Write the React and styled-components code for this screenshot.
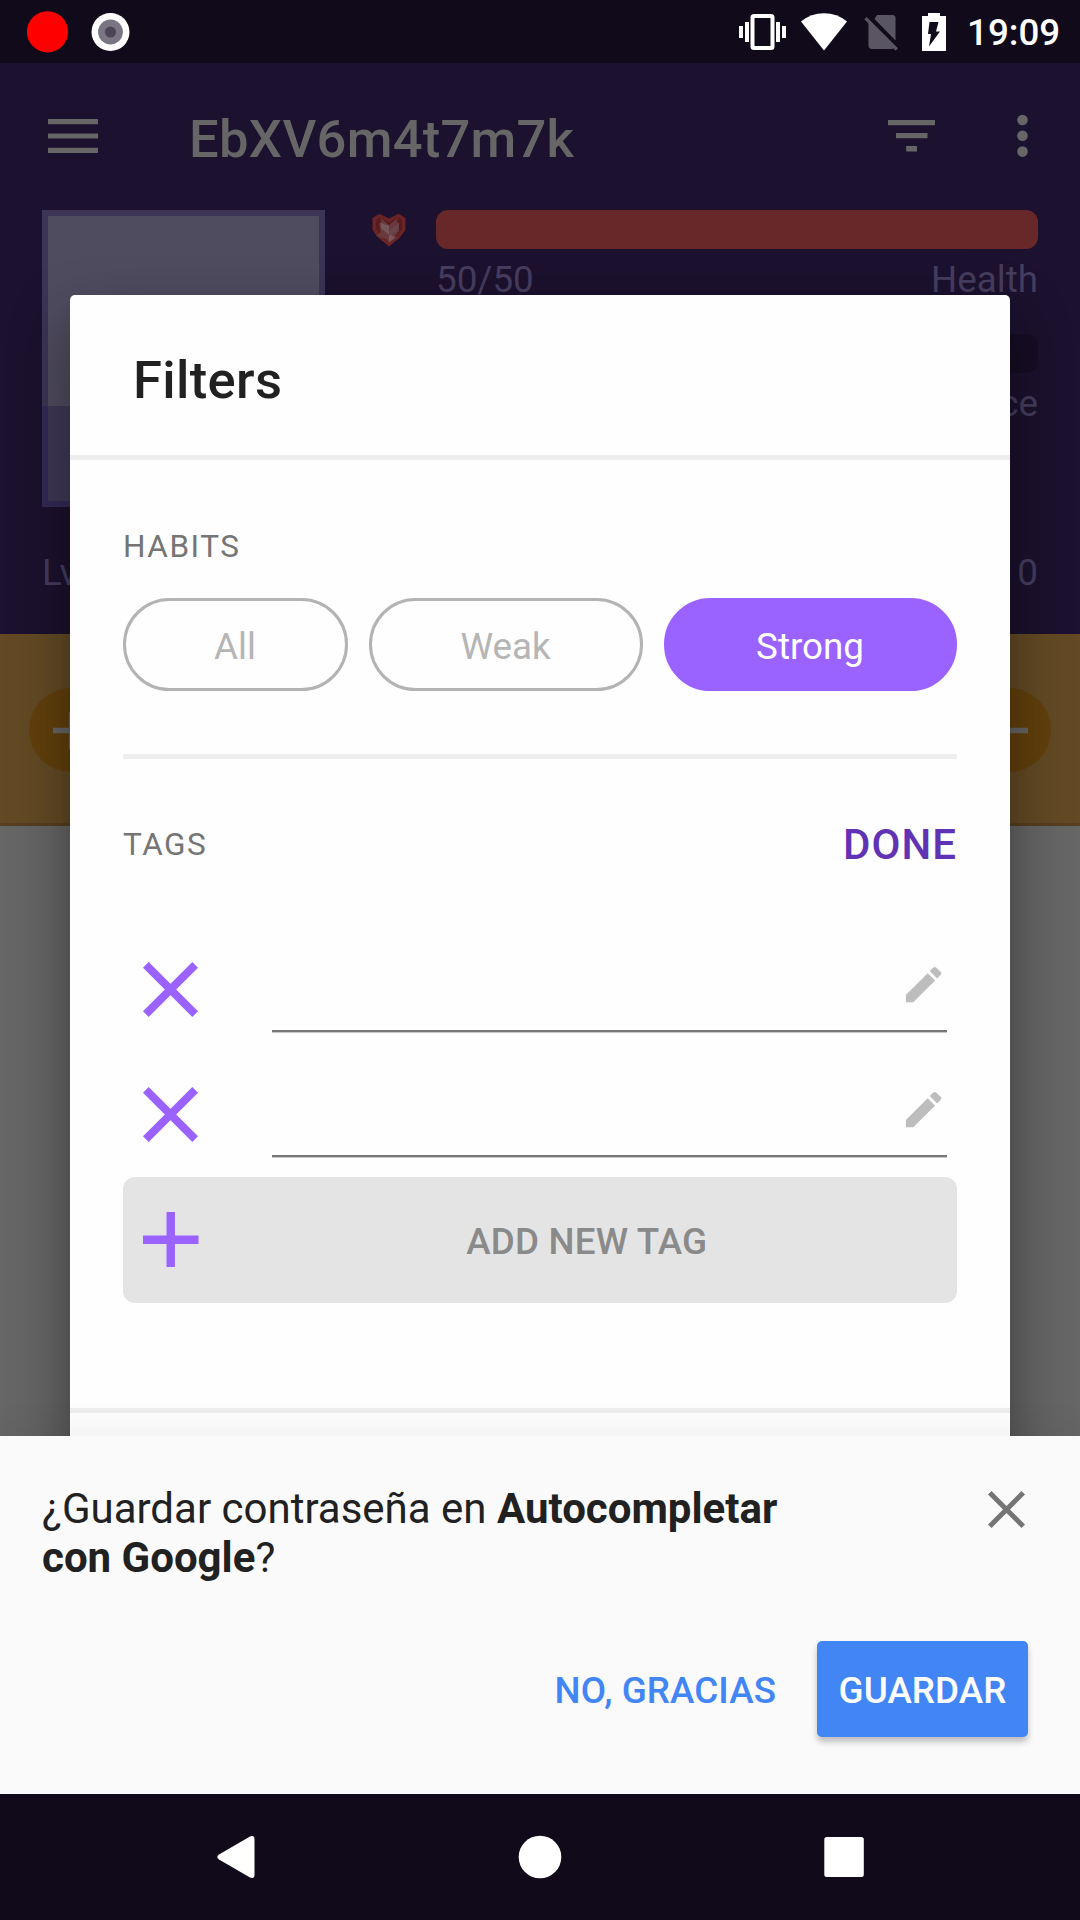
import React from "react";
import styled, { createGlobalStyle } from "styled-components";

const GlobalStyle = createGlobalStyle`
  * { box-sizing: border-box; }
  html, body { margin: 0; padding: 0; }
  body { width: 1080px; height: 1920px; overflow: hidden; background: #666; }
`;

const Screen = styled.div`
  position: relative;
  width: 1080px;
  height: 1920px;
  overflow: hidden;
  display: flex;
  flex-direction: column;
  background: #666666;
  font-family: Roboto, "Noto Sans", sans-serif;
  svg { display: block; flex: none; }
`;

const StatusBar = styled.header`
  display: flex;
  align-items: center;
  justify-content: space-between;
  height: 63px;
  flex: none;
  padding: 0 22px 0 27px;
  background: #110a1a;
`;

const StatusGroup = styled.div`
  display: flex;
  align-items: center;
  gap: ${(p) => p.$gap || 0}px;
`;

const Clock = styled.span`
  margin-left: 21px;
  margin-top: 2px;
  width: 91px;
  color: #fff;
  font-size: 36.75px;
  font-weight: 500;
  line-height: 43px;
  white-space: nowrap;
`;

const AppHeader = styled.section`
  flex: none;
  height: 571px;
  background: #1c112e;
  color: #463d5f;
`;

const Toolbar = styled.div`
  display: flex;
  align-items: center;
  height: 147px;
  padding: 0 52px 2px 48px;
`;

const ToolbarTitle = styled.h1`
  flex: 1;
  margin: 6px 0 0 91px;
  color: #666;
  font-size: 52.5px;
  font-weight: 500;
  line-height: 62px;
  letter-spacing: 0.25px;
`;

const Stats = styled.div`
  display: flex;
  padding: 0 42px;
  height: 297px;
`;

const Avatar = styled.div`
  display: flex;
  flex-direction: column;
  width: 283px;
  height: 297px;
`;

const AvatarSky = styled.div`
  height: 196px;
  background: #504c60;
  border: 6px solid #3c3556;
  border-bottom: 0;
`;

const AvatarGround = styled.div`
  flex: 1;
  background: #403857;
  border: 6px solid #322b55;
  border-top: 0;
`;

const StatList = styled.div`
  flex: 1;
  display: flex;
  flex-direction: column;
  gap: 33px;
  margin-left: 47px;
`;

const Stat = styled.div`
  display: grid;
  grid-template-columns: 64px 1fr;
  grid-template-rows: 39px 43px;
  row-gap: 9px;
`;

const StatIcon = styled.div`
  padding-top: 3px;
`;

const StatBar = styled.div`
  border-radius: 12px;
  background: ${(p) => p.$color};
`;

const StatCaption = styled.div`
  grid-column: 2;
  display: flex;
  justify-content: space-between;
  font-size: 36.75px;
  line-height: 43px;
`;

const LevelRow = styled.div`
  display: flex;
  justify-content: space-between;
  padding: 44px 42px 0;
  font-size: 36.75px;
  line-height: 43px;
`;

const HabitRow = styled.section`
  flex: none;
  display: flex;
  align-items: center;
  justify-content: space-between;
  height: 192px;
  padding: 3px 29px 0;
  background: #634a24;
  border-bottom: 3px solid #573f20;
`;

const HabitButton = styled.div`
  display: flex;
  align-items: center;
  justify-content: center;
  width: 84px;
  height: 84px;
  border-radius: 50%;
  background: #62400c;
`;

const Dialog = styled.section`
  position: absolute;
  left: 70px;
  top: 295px;
  width: 940px;
  height: 1330px;
  border-radius: 5px;
  background: #fefefe;
  box-shadow: 0 26px 60px rgba(0, 0, 0, 0.42);
`;

const DialogTitle = styled.h2`
  display: flex;
  align-items: center;
  margin: 0;
  height: 160px;
  padding: 9px 63px 0;
  color: #212121;
  font-size: 52.5px;
  font-weight: 500;
  letter-spacing: 0.35px;
`;

const Divider = styled.div`
  height: 5px;
  background: #eeeeee;
`;

const DialogBody = styled.div`
  padding: 68px 53px 0;
`;

const SectionLabel = styled.div`
  color: #757575;
  font-size: 31.5px;
  line-height: 37px;
  letter-spacing: 1.55px;
`;

const Chips = styled.div`
  display: flex;
  gap: 21px;
  margin: 33px 0 63px;
`;

const Chip = styled.button`
  width: ${(p) => p.$width}px;
  height: 93px;
  padding: 3px 1px 0 0;
  border: 3px solid ${(p) => (p.$active ? "#9a62ff" : "#b3b3b3")};
  border-radius: 47px;
  background: ${(p) => (p.$active ? "#9a62ff" : "transparent")};
  color: ${(p) => (p.$active ? "#fff" : "#b5b5b5")};
  font: 400 36.75px Roboto, sans-serif;
`;

const TagsHeader = styled.div`
  display: flex;
  align-items: center;
  justify-content: space-between;
  height: 50px;
  margin: 60px 0 58px;
`;

const DoneButton = styled.button`
  border: 0;
  padding: 0;
  background: none;
  color: #6133b4;
  font: 500 42px Roboto, sans-serif;
  letter-spacing: 1px;
`;

const TagRow = styled.div`
  display: flex;
  align-items: center;
  height: 125px;
  padding: 0 10px 0 20px;
`;

const TagField = styled.label`
  flex: 1;
  display: flex;
  align-items: center;
  height: 94px;
  margin: 0 0 9px 74px;
  padding-top: 2px;
  border-bottom: 2px solid #777;
  box-shadow: 0 1px 0 #c8c8c8;
`;

const TagInput = styled.input`
  flex: 1;
  border: 0;
  outline: 0;
  background: transparent;
  font: 400 42px Roboto, sans-serif;
`;

const AddButton = styled.button`
  display: flex;
  align-items: center;
  width: 100%;
  height: 126px;
  margin-bottom: 105px;
  padding: 0 0 1px 20px;
  border: 0;
  border-radius: 12px;
  background: #e4e4e4;
  color: #8a8a8a;
  font: 500 36.75px Roboto, sans-serif;
  letter-spacing: 0.2px;
  span { flex: 1; padding: 4px 0 0 18px; }
`;

const SaveSheet = styled.section`
  position: absolute;
  left: 0;
  top: 1436px;
  width: 1080px;
  height: 358px;
  padding: 48px 52px 0 42px;
  background: #fafafa;
  box-shadow: 0 -4px 36px rgba(0, 0, 0, 0.065);
`;

const SaveHeader = styled.div`
  display: flex;
  justify-content: space-between;
`;

const SaveMessage = styled.div`
  color: #212121;
  font-size: 42px;
`;

const MessageLine = styled.div`
  height: 49px;
  line-height: 49px;
  white-space: nowrap;
`;

const CloseWrap = styled.div`
  padding: 7px 3px 0 0;
`;

const SaveActions = styled.div`
  display: flex;
  align-items: center;
  justify-content: flex-end;
  gap: 41px;
  margin-top: 59px;
`;

const ActionButton = styled.button`
  height: 96px;
  width: ${(p) => (p.$primary ? "211px" : "auto")};
  padding: 3px 0 0;
  border: 0;
  border-radius: 5px;
  background: ${(p) => (p.$primary ? "#4285f4" : "transparent")};
  color: ${(p) => (p.$primary ? "#fff" : "#4285f4")};
  box-shadow: ${(p) => (p.$primary ? "0 5px 6px rgba(0,0,0,.24)" : "none")};
  font: 500 36.75px Roboto, sans-serif;
  letter-spacing: 0.1px;
  white-space: nowrap;
`;

const NavBar = styled.nav`
  position: absolute;
  left: 0;
  bottom: 0;
  display: flex;
  align-items: center;
  justify-content: space-between;
  width: 1080px;
  height: 126px;
  padding: 0 216px 0 217px;
  background: #110a1a;
`;

const RecordIcon = () => (
  <svg width="42" height="42" viewBox="0 0 42 42"><circle cx="20.5" cy="20.8" r="20.6" fill="#f00" /></svg>
);

const LensIcon = () => (
  <svg width="40" height="40" viewBox="0 0 40 40">
    <circle cx="19.5" cy="20" r="19" fill="#fff" />
    <circle cx="19.5" cy="20" r="12.4" fill="#7a7583" />
    <circle cx="19.5" cy="20" r="5.6" fill="#4b4555" />
  </svg>
);

const VibrateIcon = () => (
  <svg width="48" height="38" viewBox="0 0 48 38" fill="#fff">
    <path d="M0 13h4v12H0zM6 9h4v20H6zM37 9h4v20h-4zM43 13h4v12h-4z" />
    <rect x="13.5" y="3" width="20" height="32" rx="1.5" fill="none" stroke="#fff" strokeWidth="4" />
  </svg>
);

const WifiIcon = () => (
  <svg width="46" height="38" viewBox="0 0 46 38"><path d="M0 8.500Q10 .300 23 .300T46 8.500L23 37.500Z" fill="#fff" /></svg>
);

const NoSimIcon = () => (
  <svg width="35" height="38" viewBox="0 0 35 38">
    <path d="M13 2h15.500q3 0 3 3v22.500L10.500 6ZM4.500 9.500 30 34.500q-1 1.500-2.500 1.500H8q-3.500 0-3.500-3.500Z" fill="#5a5562" />
    <path d="M1.500 5.200 32.800 36.500" stroke="#5a5562" strokeWidth="3.200" />
  </svg>
);

const BatteryIcon = () => (
  <svg width="24" height="38" viewBox="0 0 24 38">
    <path fillRule="evenodd" d="M6 0h12v3h6v35H0V3h6ZM7.500 9h9l-2.500 9.500h4L7 33.500l2-12.500H6Z" fill="#fff" />
  </svg>
);

const MenuIcon = () => (
  <svg width="50" height="36" viewBox="0 0 50 36"><path d="M0 1h50v5.200H0zM0 15.400h50v5.200H0zM0 29.800h50V35H0z" fill="#666" /></svg>
);

const FilterIcon = () => (
  <svg width="47" height="32" viewBox="0 0 47 32"><path d="M0 0h47v5.200H0zM8 13.100h31.500v5.200H8zM18.200 26.100h10.800v5.400H18.200z" fill="#666" /></svg>
);

const MoreIcon = styled(({ className }) => (
  <svg className={className} width="11" height="44" viewBox="0 0 11 44" fill="#666">
    <circle cx="5.500" cy="6" r="5.300" /><circle cx="5.500" cy="21.800" r="5.300" /><circle cx="5.500" cy="37.600" r="5.300" />
  </svg>
))`
  margin-left: 82px;
`;

const HeartIcon = () => (
  <svg width="34" height="34" viewBox="0 0 34 34">
    <path d="M7.500.800 17 5.500 26.500.800 33.500 5v12L27.500 25 17 33.500 6.500 25 .500 17V5Z" fill="#6b2426" />
    <path d="M8 4.500 17 9.500 26 4.500 30 7v9l-5.500 7L17 29l-7.500-6L4 16V7Z" fill="#571a1e" />
    <path d="M8 4.500 17 12 26 4.500 24.500 9 27 10v8l-4 5 2 2-8 4.500-3-3.500-10-3 4.500-4-1.500-9 2.500-1Z" fill="#69393c" />
    <path d="M17 13v9l-8-7V10ZM17 20l6 4.500-6 5Z" fill="#76575a" />
    <path d="M27 10 17 18v5l9-5Z" fill="#6a4548" />
  </svg>
);

const PlusIcon = ({ size, color, thick }) => (
  <svg width={size} height={size} viewBox={`0 0 ${size} ${size}`}>
    <path d={`M0 ${size / 2}H${size}M${size / 2} 0V${size}`} stroke={color} strokeWidth={thick} />
  </svg>
);

const MinusIcon = () => (
  <svg width="37" height="37" viewBox="0 0 37 37"><path d="M0 18.500h37" stroke="#666" strokeWidth="5.300" /></svg>
);

const CrossIcon = ({ size, color, thick }) => {
  const e = thick * 0.354;
  return (
    <svg width={size} height={size} viewBox={`0 0 ${size} ${size}`}>
      <path d={`M${e} ${e}L${size - e} ${size - e}M${size - e} ${e}L${e} ${size - e}`} stroke={color} strokeWidth={thick} />
    </svg>
  );
};

const PencilIcon = () => (
  <svg width="47.25" height="47.25" viewBox="0 0 24 24">
    <path fill="#bdbdbd" d="M3 17.250V21h3.750L17.810 9.940l-3.750-3.750L3 17.250zM20.710 7.040c.390-.390.390-1.020 0-1.410l-2.340-2.340c-.390-.390-1.020-.390-1.410 0l-1.830 1.830 3.750 3.750 1.830-1.830z" />
  </svg>
);

const BackIcon = () => (
  <svg width="38" height="42" viewBox="0 0 38 42">
    <path d="M33 .500Q37.500-1 37.500 3v36q0 4-4.500 2.500L2 23.500q-3.500-2.500 0-5Z" fill="#fff" />
  </svg>
);

const HomeIcon = () => (
  <svg width="44" height="44" viewBox="0 0 44 44"><circle cx="22" cy="22" r="21.300" fill="#fff" /></svg>
);

const RecentsIcon = () => (
  <svg width="40" height="42" viewBox="0 0 40 42"><rect x="0.300" y="1" width="39.500" height="40" rx="2.500" fill="#fff" /></svg>
);

const chips = [
  { label: "All", width: 225 },
  { label: "Weak", width: 274 },
  { label: "Strong", width: 293, active: true },
];

export default function App() {
  return (
    <>
      <GlobalStyle />
      <Screen>
        <StatusBar>
          <StatusGroup $gap={22}>
            <RecordIcon />
            <LensIcon />
          </StatusGroup>
          <StatusGroup>
            <StatusGroup $gap={17}>
              <StatusGroup $gap={14}>
                <VibrateIcon />
                <WifiIcon />
              </StatusGroup>
              <StatusGroup $gap={23}>
                <NoSimIcon />
                <BatteryIcon />
              </StatusGroup>
            </StatusGroup>
            <Clock>19:09</Clock>
          </StatusGroup>
        </StatusBar>

        <AppHeader>
          <Toolbar>
            <MenuIcon />
            <ToolbarTitle>EbXV6m4t7m7k</ToolbarTitle>
            <FilterIcon />
            <MoreIcon />
          </Toolbar>
          <Stats>
            <Avatar>
              <AvatarSky />
              <AvatarGround />
            </Avatar>
            <StatList>
              <Stat>
                <StatIcon><HeartIcon /></StatIcon>
                <StatBar $color="#682829" />
                <StatCaption><span>50/50</span><span>Health</span></StatCaption>
              </Stat>
              <Stat>
                <StatIcon />
                <StatBar $color="#160d24" />
                <StatCaption><span /><span>Experience</span></StatCaption>
              </Stat>
            </StatList>
          </Stats>
          <LevelRow><span>Lvl 1</span><span>0</span></LevelRow>
        </AppHeader>

        <HabitRow>
          <HabitButton><PlusIcon size={37} color="#666" thick={5.3} /></HabitButton>
          <HabitButton><MinusIcon /></HabitButton>
        </HabitRow>

        <Dialog>
          <DialogTitle>Filters</DialogTitle>
          <Divider />
          <DialogBody>
            <SectionLabel>HABITS</SectionLabel>
            <Chips>
              {chips.map((c) => (
                <Chip key={c.label} $width={c.width} $active={c.active}>{c.label}</Chip>
              ))}
            </Chips>
            <Divider />
            <TagsHeader>
              <SectionLabel>TAGS</SectionLabel>
              <DoneButton>DONE</DoneButton>
            </TagsHeader>
            {[0, 1].map((row) => (
              <TagRow key={row}>
                <CrossIcon size={55} color="#9a62ff" thick={8} />
                <TagField>
                  <TagInput />
                  <PencilIcon />
                </TagField>
              </TagRow>
            ))}
            <AddButton>
              <PlusIcon size={55.5} color="#9a62ff" thick={8.4} />
              <span>ADD NEW TAG</span>
            </AddButton>
          </DialogBody>
          <Divider />
        </Dialog>

        <SaveSheet>
          <SaveHeader>
            <SaveMessage>
              <MessageLine>¿Guardar contraseña en <b>Autocompletar</b></MessageLine>
              <MessageLine><b>con Google</b>?</MessageLine>
            </SaveMessage>
            <CloseWrap><CrossIcon size={37} color="#757575" thick={5} /></CloseWrap>
          </SaveHeader>
          <SaveActions>
            <ActionButton>NO, GRACIAS</ActionButton>
            <ActionButton $primary>GUARDAR</ActionButton>
          </SaveActions>
        </SaveSheet>

        <NavBar>
          <BackIcon />
          <HomeIcon />
          <RecentsIcon />
        </NavBar>
      </Screen>
    </>
  );
}
